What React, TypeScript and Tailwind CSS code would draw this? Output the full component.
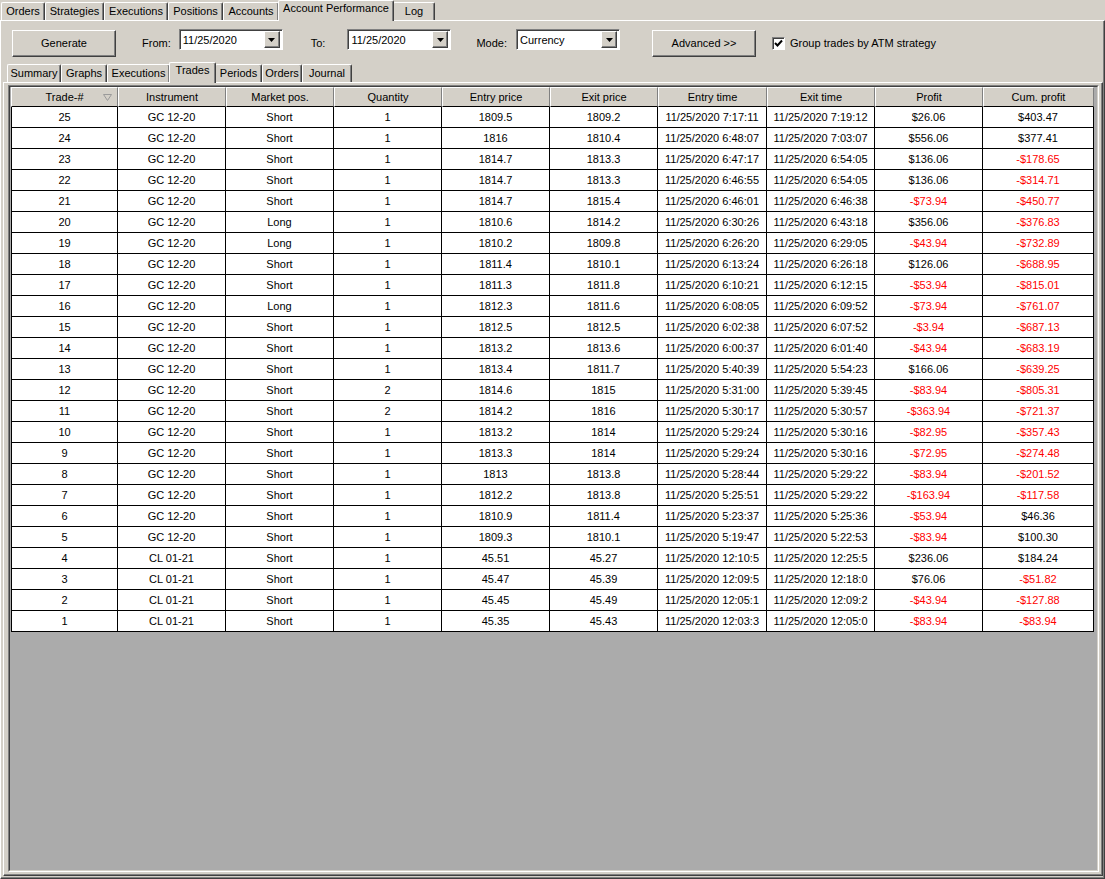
import React from "react";

type Row = [number, string, string, number, string, string, string, string, string, string];

const ROWS: Row[] = [
  [25, "GC 12-20", "Short", 1, "1809.5", "1809.2", "11/25/2020 7:17:11", "11/25/2020 7:19:12", "$26.06", "$403.47"],
  [24, "GC 12-20", "Short", 1, "1816", "1810.4", "11/25/2020 6:48:07", "11/25/2020 7:03:07", "$556.06", "$377.41"],
  [23, "GC 12-20", "Short", 1, "1814.7", "1813.3", "11/25/2020 6:47:17", "11/25/2020 6:54:05", "$136.06", "-$178.65"],
  [22, "GC 12-20", "Short", 1, "1814.7", "1813.3", "11/25/2020 6:46:55", "11/25/2020 6:54:05", "$136.06", "-$314.71"],
  [21, "GC 12-20", "Short", 1, "1814.7", "1815.4", "11/25/2020 6:46:01", "11/25/2020 6:46:38", "-$73.94", "-$450.77"],
  [20, "GC 12-20", "Long", 1, "1810.6", "1814.2", "11/25/2020 6:30:26", "11/25/2020 6:43:18", "$356.06", "-$376.83"],
  [19, "GC 12-20", "Long", 1, "1810.2", "1809.8", "11/25/2020 6:26:20", "11/25/2020 6:29:05", "-$43.94", "-$732.89"],
  [18, "GC 12-20", "Short", 1, "1811.4", "1810.1", "11/25/2020 6:13:24", "11/25/2020 6:26:18", "$126.06", "-$688.95"],
  [17, "GC 12-20", "Short", 1, "1811.3", "1811.8", "11/25/2020 6:10:21", "11/25/2020 6:12:15", "-$53.94", "-$815.01"],
  [16, "GC 12-20", "Long", 1, "1812.3", "1811.6", "11/25/2020 6:08:05", "11/25/2020 6:09:52", "-$73.94", "-$761.07"],
  [15, "GC 12-20", "Short", 1, "1812.5", "1812.5", "11/25/2020 6:02:38", "11/25/2020 6:07:52", "-$3.94", "-$687.13"],
  [14, "GC 12-20", "Short", 1, "1813.2", "1813.6", "11/25/2020 6:00:37", "11/25/2020 6:01:40", "-$43.94", "-$683.19"],
  [13, "GC 12-20", "Short", 1, "1813.4", "1811.7", "11/25/2020 5:40:39", "11/25/2020 5:54:23", "$166.06", "-$639.25"],
  [12, "GC 12-20", "Short", 2, "1814.6", "1815", "11/25/2020 5:31:00", "11/25/2020 5:39:45", "-$83.94", "-$805.31"],
  [11, "GC 12-20", "Short", 2, "1814.2", "1816", "11/25/2020 5:30:17", "11/25/2020 5:30:57", "-$363.94", "-$721.37"],
  [10, "GC 12-20", "Short", 1, "1813.2", "1814", "11/25/2020 5:29:24", "11/25/2020 5:30:16", "-$82.95", "-$357.43"],
  [9, "GC 12-20", "Short", 1, "1813.3", "1814", "11/25/2020 5:29:24", "11/25/2020 5:30:16", "-$72.95", "-$274.48"],
  [8, "GC 12-20", "Short", 1, "1813", "1813.8", "11/25/2020 5:28:44", "11/25/2020 5:29:22", "-$83.94", "-$201.52"],
  [7, "GC 12-20", "Short", 1, "1812.2", "1813.8", "11/25/2020 5:25:51", "11/25/2020 5:29:22", "-$163.94", "-$117.58"],
  [6, "GC 12-20", "Short", 1, "1810.9", "1811.4", "11/25/2020 5:23:37", "11/25/2020 5:25:36", "-$53.94", "$46.36"],
  [5, "GC 12-20", "Short", 1, "1809.3", "1810.1", "11/25/2020 5:19:47", "11/25/2020 5:22:53", "-$83.94", "$100.30"],
  [4, "CL 01-21", "Short", 1, "45.51", "45.27", "11/25/2020 12:10:5", "11/25/2020 12:25:5", "$236.06", "$184.24"],
  [3, "CL 01-21", "Short", 1, "45.47", "45.39", "11/25/2020 12:09:5", "11/25/2020 12:18:0", "$76.06", "-$51.82"],
  [2, "CL 01-21", "Short", 1, "45.45", "45.49", "11/25/2020 12:05:1", "11/25/2020 12:09:2", "-$43.94", "-$127.88"],
  [1, "CL 01-21", "Short", 1, "45.35", "45.43", "11/25/2020 12:03:3", "11/25/2020 12:05:0", "-$83.94", "-$83.94"],
];

const HEADERS = ["Trade-#", "Instrument", "Market pos.", "Quantity", "Entry price", "Exit price", "Entry time", "Exit time", "Profit", "Cum. profit"];
const WIDTHS = [107, 108, 108, 108, 108, 108, 109, 108, 108, 111];

const TOP_TABS = [
  { label: "Orders", w: 44 },
  { label: "Strategies", w: 59 },
  { label: "Executions", w: 64 },
  { label: "Positions", w: 55 },
  { label: "Accounts", w: 56 },
  { label: "Account Performance", w: 116, active: true },
  { label: "Log", w: 42 },
];

const SUB_TABS = [
  { label: "Summary", w: 54 },
  { label: "Graphs", w: 46 },
  { label: "Executions", w: 63 },
  { label: "Trades", w: 47, active: true },
  { label: "Periods", w: 47 },
  { label: "Orders", w: 40 },
  { label: "Journal", w: 50 },
];

function Tab({ label, w, active }: { label: string; w: number; active?: boolean }) {
  return (
    <div
      style={{ width: w }}
      className={
        active
          ? "relative z-10 -mb-px -mx-[1px] h-[21px] bg-[#d4d0c8] border-t border-l border-white border-r border-r-[#404040] shadow-[inset_-1px_0_0_#808080] rounded-t-[2px] flex items-start justify-center pt-[2px] whitespace-nowrap"
          : "h-[18px] bg-[#d4d0c8] border-t border-l border-white border-r border-r-[#404040] shadow-[inset_-1px_0_0_#808080] rounded-t-[2px] flex items-center justify-center whitespace-nowrap"
      }
    >
      {label}
    </div>
  );
}

function Combo({ value, w }: { value: string; w: number }) {
  return (
    <div
      style={{ width: w }}
      className="h-[21px] bg-white border border-t-[#808080] border-l-[#808080] border-r-white border-b-white shadow-[inset_1px_1px_0_#404040] flex items-center pl-[3px] pr-[2px]"
    >
      <span className="flex-1 pt-px">{value}</span>
      <div className="w-[16px] h-[17px] bg-[#d4d0c8] border border-t-white border-l-white border-r-[#404040] border-b-[#404040] shadow-[inset_-1px_-1px_0_#808080] flex items-center justify-center">
        <svg width="7" height="4" viewBox="0 0 7 4">
          <polygon points="0,0 7,0 3.5,4" fill="#000" />
        </svg>
      </div>
    </div>
  );
}

function Button({ label }: { label: string }) {
  return (
    <div className="w-[104px] h-[27px] bg-[#d4d0c8] border border-t-white border-l-white border-r-[#404040] border-b-[#404040] shadow-[inset_-1px_-1px_0_#808080] flex items-center justify-center">
      {label}
    </div>
  );
}

export default function App() {
  return (
    <div
      className="w-[1105px] h-[879px] bg-[#d4d0c8] text-black text-[11px] leading-none flex flex-col overflow-hidden"
      style={{ fontFamily: '"Liberation Sans", Arial, sans-serif' }}
    >
      {/* top tabs */}
      <div className="h-[20px] flex items-end pl-[1px]">
        {TOP_TABS.map((t) => (
          <Tab key={t.label} {...t} />
        ))}
      </div>

      {/* main panel */}
      <div className="flex-1 flex flex-col border border-t-white border-l-white border-r-[#404040] border-b-[#404040] shadow-[inset_-1px_-1px_0_#808080] min-h-0">
        {/* toolbar */}
        <div className="flex items-start mt-[9px] pl-[11px]">
          <Button label="Generate" />
          <div className="h-[27px] flex items-center ml-[26px]">From:</div>
          <div className="-mt-px ml-[8px]">
            <Combo value="11/25/2020" w={104} />
          </div>
          <div className="h-[27px] flex items-center ml-[28px]">To:</div>
          <div className="-mt-px ml-[22px]">
            <Combo value="11/25/2020" w={104} />
          </div>
          <div className="h-[27px] flex items-center ml-[25px]">Mode:</div>
          <div className="-mt-px ml-[9px]">
            <Combo value="Currency" w={104} />
          </div>
          <div className="ml-[32px]">
            <Button label="Advanced >>" />
          </div>
          <div className="h-[27px] flex items-center ml-[16px]">
            <div className="w-[13px] h-[13px] bg-white border border-t-[#808080] border-l-[#808080] border-r-white border-b-white shadow-[inset_1px_1px_0_#404040] flex items-center justify-center">
              <svg width="9" height="9" viewBox="0 0 9 9">
                <path d="M1 4 L3.5 6.5 L8 1.5" stroke="#000" strokeWidth="2" fill="none" />
              </svg>
            </div>
            <span className="ml-[5px]">Group trades by ATM strategy</span>
          </div>
        </div>

        {/* sub tabs */}
        <div className="h-[20px] flex items-end pl-[6px] mt-[5px]">
          {SUB_TABS.map((t) => (
            <Tab key={t.label} {...t} />
          ))}
        </div>

        {/* sub panel */}
        <div className="flex-1 min-h-0 flex flex-col ml-[2px] mr-[1px] mb-[2px] border border-t-white border-l-white border-r-[#404040] border-b-[#404040] shadow-[inset_-1px_-1px_0_#808080] pt-[2px] pl-[4px] pr-[3px] pb-[3px]">
          <div className="flex-1 min-h-0 flex flex-col border border-t-[#808080] border-l-[#808080] border-r-white border-b-white">
            <div className="flex-1 min-h-0 border border-t-[#404040] border-l-[#404040] border-r-[#d4d0c8] border-b-[#d4d0c8] bg-[#ababab] pl-px overflow-hidden">
              <table className="table-fixed border-separate border-spacing-0" style={{ width: 1083 }}>
                <colgroup>
                  {WIDTHS.map((w, i) => (
                    <col key={i} style={{ width: w }} />
                  ))}
                </colgroup>
                <thead>
                  <tr>
                    {HEADERS.map((h, i) => (
                      <th
                        key={h}
                        className="h-[20px] p-0 font-normal bg-[#d4d0c8] border-t border-l border-t-white border-l-white border-r border-r-[#808080] border-b border-b-black relative"
                      >
                        <span className="block text-center">{h}</span>
                        {i === 0 && (
                          <svg className="absolute right-[5px] top-[6px]" width="9" height="7" viewBox="0 0 9 7">
                            <polygon points="0.5,0.5 8.5,0.5 4.5,6.5" fill="none" stroke="#9a9a9a" />
                          </svg>
                        )}
                      </th>
                    ))}
                  </tr>
                </thead>
                <tbody>
                  {ROWS.map((r) => (
                    <tr key={r[0]}>
                      {r.map((c, i) => {
                        const s = String(c);
                        const red = i >= 8 && s.startsWith("-");
                        return (
                          <td
                            key={i}
                            className={
                              "h-[21px] p-0 bg-white text-center whitespace-nowrap overflow-hidden border-b border-r border-black " +
                              (i === 0 ? "border-l " : "") +
                              (red ? "text-[#ff0000]" : "text-black")
                            }
                          >
                            {s}
                          </td>
                        );
                      })}
                    </tr>
                  ))}
                </tbody>
              </table>
            </div>
          </div>
        </div>
      </div>
    </div>
  );
}
